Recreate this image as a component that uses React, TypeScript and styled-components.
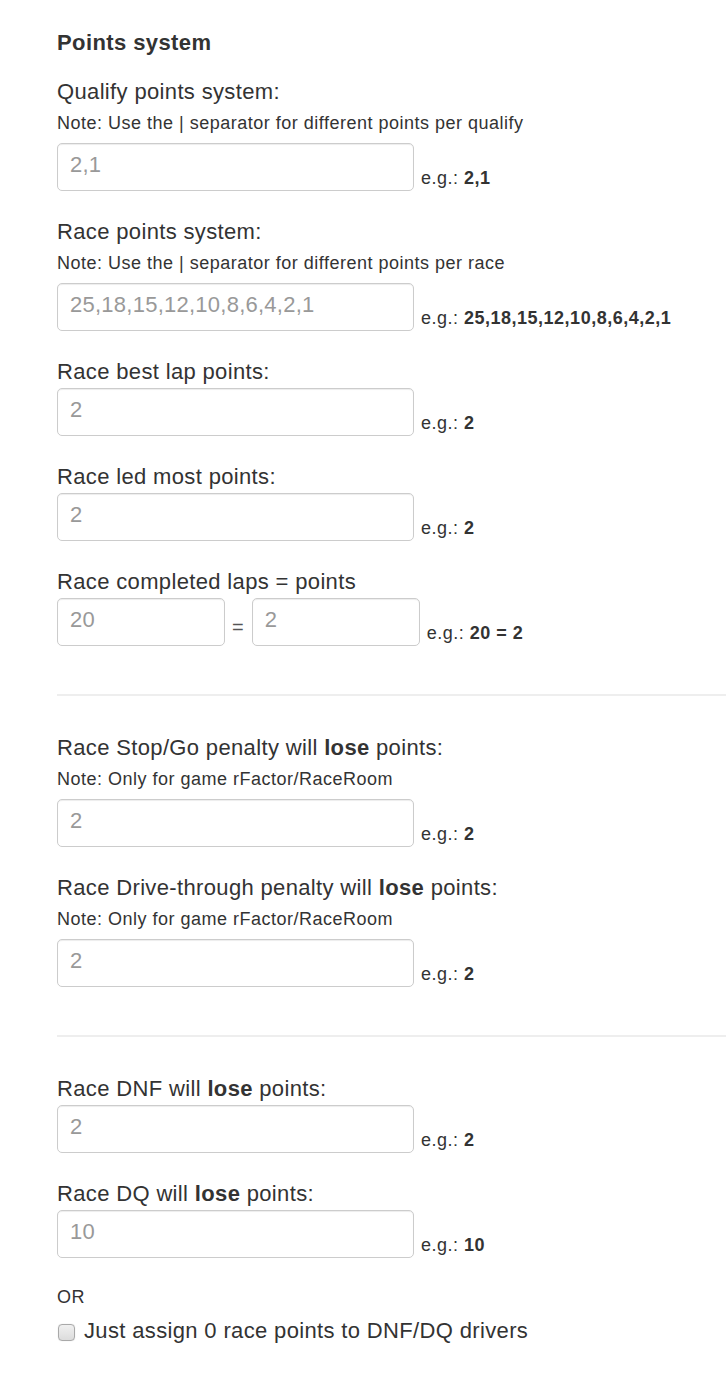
import React from "react"
import styled, { createGlobalStyle } from "styled-components"

const GlobalStyle = createGlobalStyle`
  html, body {
    margin: 0;
    padding: 0;
    background: #fff;
  }
  body {
    font-family: "Liberation Sans", Arial, Helvetica, sans-serif;
    color: #333;
  }
`

const Page = styled.div`
  padding: 28px 0 40px 57px;
`

const Title = styled.h4`
  margin: 0 0 21px;
  font-size: 22px;
  letter-spacing: 0.4px;
  line-height: 30px;
  font-weight: 700;
`

const Group = styled.div`
  margin-bottom: 28px;
`

const Label = styled.label`
  display: block;
  font-size: 22px;
  letter-spacing: 0.35px;
  line-height: 26px;
  margin-bottom: 3px;
`

const Note = styled.div`
  font-size: 18px;
  letter-spacing: 0.5px;
  line-height: 22px;
  margin: 7px 0 9px;
`

const Row = styled.div`
  display: flex;
  align-items: flex-end;
`

const Input = styled.input<{ $w?: number }>`
  box-sizing: border-box;
  width: ${({ $w }) => $w ?? 357}px;
  height: 48px;
  padding: 0 12px 4px;
  font-family: inherit;
  font-size: 22px;
  letter-spacing: 0.25px;
  color: #555;
  border: 1px solid #ccc;
  border-radius: 5px;
  box-shadow: inset 0 1px 1px rgba(0, 0, 0, 0.075);
  background: #fff;
  outline: none;

  &::placeholder {
    color: #999;
  }
`

const Equals = styled.span`
  font-size: 20px;
  line-height: 20px;
  padding: 0 8px 9px 7px;
  color: #555;
`

const Example = styled.span`
  font-size: 18px;
  letter-spacing: 0.5px;
  line-height: 20px;
  margin: 0 0 3px 7px;

  & b {
    font-weight: 700;
  }
`

const Divider = styled.hr`
  border: 0;
  border-top: 2px solid #eee;
  margin: 48px 0 39px;
`

const Or = styled.div`
  font-size: 18px;
  letter-spacing: 0.5px;
  line-height: 22px;
`

const CheckLabel = styled.label`
  display: flex;
  align-items: center;
  gap: 9px;
  margin-top: 10px;
  font-size: 22px;
  letter-spacing: 0.35px;
  line-height: 26px;
`

const Box = styled.span`
  box-sizing: border-box;
  width: 17px;
  height: 17px;
  margin-left: 1px;
  margin-top: 3px;
  border: 1px solid #a9a9a9;
  border-radius: 4px;
  background: linear-gradient(#f0f0f0, #dcdcdc);
  box-shadow: 0 0 1px rgba(0, 0, 0, 0.2);
`

type Field = {
  label: React.ReactNode
  note?: string
  placeholder: string
  example: string
}

const FieldGroup = ({ label, note, placeholder, example }: Field) => (
  <Group>
    <Label>{label}</Label>
    {note && <Note>{note}</Note>}
    <Row>
      <Input placeholder={placeholder} />
      <Example>
        e.g.: <b>{example}</b>
      </Example>
    </Row>
  </Group>
)

const App = () => (
  <Page>
    <GlobalStyle />
    <Title>Points system</Title>

    <FieldGroup
      label="Qualify points system:"
      note="Note: Use the | separator for different points per qualify"
      placeholder="2,1"
      example="2,1"
    />
    <FieldGroup
      label="Race points system:"
      note="Note: Use the | separator for different points per race"
      placeholder="25,18,15,12,10,8,6,4,2,1"
      example="25,18,15,12,10,8,6,4,2,1"
    />
    <FieldGroup label="Race best lap points:" placeholder="2" example="2" />
    <FieldGroup label="Race led most points:" placeholder="2" example="2" />

    <Group>
      <Label>Race completed laps = points</Label>
      <Row>
        <Input $w={168} placeholder="20" />
        <Equals>=</Equals>
        <Input $w={168} placeholder="2" />
        <Example>
          e.g.: <b>20 = 2</b>
        </Example>
      </Row>
    </Group>

    <Divider />

    <FieldGroup
      label={
        <>
          Race Stop/Go penalty will <b>lose</b> points:
        </>
      }
      note="Note: Only for game rFactor/RaceRoom"
      placeholder="2"
      example="2"
    />
    <FieldGroup
      label={
        <>
          Race Drive-through penalty will <b>lose</b> points:
        </>
      }
      note="Note: Only for game rFactor/RaceRoom"
      placeholder="2"
      example="2"
    />

    <Divider />

    <FieldGroup
      label={
        <>
          Race DNF will <b>lose</b> points:
        </>
      }
      placeholder="2"
      example="2"
    />
    <FieldGroup
      label={
        <>
          Race DQ will <b>lose</b> points:
        </>
      }
      placeholder="10"
      example="10"
    />

    <Or>OR</Or>
    <CheckLabel>
      <Box />
      Just assign 0 race points to DNF/DQ drivers
    </CheckLabel>
  </Page>
)

export default App
